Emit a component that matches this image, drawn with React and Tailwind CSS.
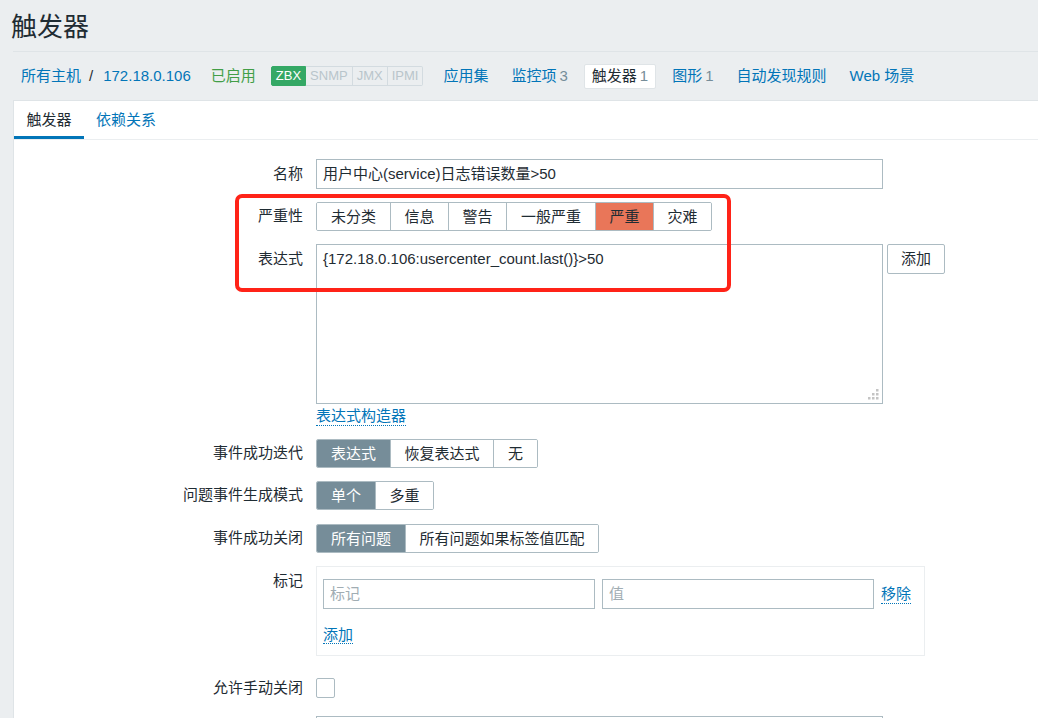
import React from "react";

const font = "font-['Liberation_Sans','Noto_Sans_CJK_SC',sans-serif]";

const Segmented = ({ items, active, activeClass }) => (
  <div className="flex h-[29px] border border-[#acbbc2] rounded-[2px] overflow-hidden">
    {items.map(([label, w], i) => (
      <div
        key={label}
        style={{ width: w }}
        className={`flex items-center justify-center ${
          i > 0 ? "border-l border-[#acbbc2]" : ""
        } ${i === active ? activeClass : "bg-white text-[#1f2c33]"}`}
      >
        {label}
      </div>
    ))}
  </div>
);

const Row = ({ label, className = "", labelClass = "", children }) => (
  <div className={`flex ${className}`}>
    <div
      className={`w-[289px] shrink-0 text-right text-[#1f2c33] ${labelClass}`}
    >
      {label}
    </div>
    <div className="ml-[13px] flex items-start">{children}</div>
  </div>
);

const NavLink = ({ children, count, selected }) => (
  <div
    className={`px-[7px] h-[25px] flex items-center ${
      selected
        ? "bg-white border border-[#dfe4e7] rounded-[2px] text-[#1f2c33]"
        : "text-[#0275b8]"
    }`}
  >
    {children}
    {count && <span className="ml-[3px] text-[#768d99]">{count}</span>}
  </div>
);

export default function App() {
  return (
    <div
      className={`relative min-h-[718px] bg-[#ebeef0] text-[15px] leading-[18px] text-[#1f2c33] ${font}`}
    >
      {/* page title */}
      <div className="ml-[13px] h-[52px] border-b border-[#dfe4e7] pt-[11px]">
        <h1 className="text-[26px] leading-[32px] -ml-[2px] text-[#1f2c33]">
          触发器
        </h1>
      </div>

      {/* host navigation */}
      <div className="flex items-center h-[48px] pl-[13px]">
        <div className="flex items-center px-[8px] text-[#0275b8]">
          所有主机
        </div>
        <span className="text-[#1f2c33]">/</span>
        <div className="pl-[10px] text-[#0275b8]">172.18.0.106</div>
        <div className="ml-[20px] text-[#429e47]">已启用</div>
        <div className="ml-[15px] flex h-[20px] text-[13px] leading-[18px] mr-[13px]">
          <span className="px-[4px] bg-[#34a865] text-white rounded-l-[2px] border border-[#34a865]">
            ZBX
          </span>
          <span className="px-[4px] text-[#b9c5cb] border border-[#d3dbe0] border-l-0">
            SNMP
          </span>
          <span className="px-[4px] text-[#b9c5cb] border border-[#d3dbe0] border-l-0">
            JMX
          </span>
          <span className="px-[4px] text-[#b9c5cb] border border-[#d3dbe0] border-l-0 rounded-r-[2px]">
            IPMI
          </span>
        </div>
        <div className="flex items-center gap-[9px]">
          <NavLink>应用集</NavLink>
          <NavLink count="3">监控项</NavLink>
          <NavLink count="1" selected>
            触发器
          </NavLink>
          <NavLink count="1">图形</NavLink>
          <NavLink>自动发现规则</NavLink>
          <NavLink>Web 场景</NavLink>
        </div>
      </div>

      {/* main panel */}
      <div className="ml-[13px] bg-white border-l border-t border-[#dfe4e7] min-h-[618px]">
        <div className="flex h-[39px] border-b border-[#ebeef0]">
          <div className="w-[70px] flex items-center justify-center border-b-[3px] border-[#0275b8] pt-[3px] text-[#1f2c33]">
            触发器
          </div>
          <div className="px-[12px] flex items-center text-[#0275b8]">
            依赖关系
          </div>
        </div>

        <Row label="名称" className="mt-[19px]" labelClass="pt-[6px]">
          <div className="w-[567px] h-[30px] border border-[#acbbc2] px-[6px] flex items-center">
            用户中心(service)日志错误数量&gt;50
          </div>
        </Row>

        <Row label="严重性" className="mt-[13px]" labelClass="pt-[5px]">
          <Segmented
            items={[
              ["未分类", 73],
              ["信息", 58],
              ["警告", 58],
              ["一般严重", 89],
              ["严重", 58],
              ["灾难", 58],
            ]}
            active={4}
            activeClass="bg-[#e97659] text-[#1f2c33]"
          />
        </Row>

        <Row label="表达式" className="mt-[13px]" labelClass="pt-[6px]">
          <div className="relative w-[567px] h-[160px] border border-[#acbbc2] px-[6px] pt-[5px]">
            {"{172.18.0.106:usercenter_count.last()}>50"}
            <svg
              className="absolute right-[3px] bottom-[3px]"
              width="11"
              height="11"
              viewBox="0 0 11 11"
            >
              <g fill="#c4c4c4">
                <rect x="8" y="0" width="2.5" height="2.5" />
                <rect x="4" y="4" width="2.5" height="2.5" />
                <rect x="8" y="4" width="2.5" height="2.5" />
                <rect x="0" y="8" width="2.5" height="2.5" />
                <rect x="4" y="8" width="2.5" height="2.5" />
                <rect x="8" y="8" width="2.5" height="2.5" />
              </g>
            </svg>
          </div>
          <div className="ml-[4px] w-[58px] h-[30px] border border-[#acbbc2] rounded-[2px] flex items-center justify-center">
            添加
          </div>
        </Row>

        <Row label="" className="h-[35px]">
          <span className="mt-[3px] text-[#0275b8] border-b border-dotted border-[#0275b8]">
            表达式构造器
          </span>
        </Row>

        <Row label="事件成功迭代" labelClass="pt-[5px]">
          <Segmented
            items={[
              ["表达式", 73],
              ["恢复表达式", 103],
              ["无", 44],
            ]}
            active={0}
            activeClass="bg-[#768d99] text-white"
          />
        </Row>

        <Row label="问题事件生成模式" className="mt-[13px]" labelClass="pt-[5px]">
          <Segmented
            items={[
              ["单个", 58],
              ["多重", 58],
            ]}
            active={0}
            activeClass="bg-[#768d99] text-white"
          />
        </Row>

        <Row label="事件成功关闭" className="mt-[14px]" labelClass="pt-[5px]">
          <Segmented
            items={[
              ["所有问题", 88],
              ["所有问题如果标签值匹配", 193],
            ]}
            active={0}
            activeClass="bg-[#768d99] text-white"
          />
        </Row>

        <Row label="标记" className="mt-[13px]" labelClass="pt-[6px]">
          <div className="w-[609px] h-[90px] border border-[#ebeef0] px-[6px] pt-[12px]">
            <div className="flex items-center">
              <div className="w-[272px] h-[30px] border border-[#acbbc2] px-[6px] flex items-center text-[#a1adb3]">
                标记
              </div>
              <div className="ml-[7px] w-[272px] h-[30px] border border-[#acbbc2] px-[6px] flex items-center text-[#a1adb3]">
                值
              </div>
              <span className="ml-[7px] text-[#0275b8] border-b border-dotted border-[#0275b8]">
                移除
              </span>
            </div>
            <div className="mt-[17px]">
              <span className="text-[#0275b8] border-b border-dotted border-[#0275b8]">
                添加
              </span>
            </div>
          </div>
        </Row>

        <Row label="允许手动关闭" className="mt-[22px]" labelClass="pt-[1px]">
          <div className="w-[19px] h-[20px] border border-[#acbbc2] rounded-[2px] bg-white" />
        </Row>

        <Row label="" className="mt-[18px]">
          <div className="w-[567px] h-[30px] border border-[#acbbc2]" />
        </Row>
      </div>

      {/* red annotation */}
      <div className="absolute left-[235px] top-[194px] w-[496px] h-[98px] border-[4px] border-[#ff2318] rounded-[7px] pointer-events-none" />
    </div>
  );
}
